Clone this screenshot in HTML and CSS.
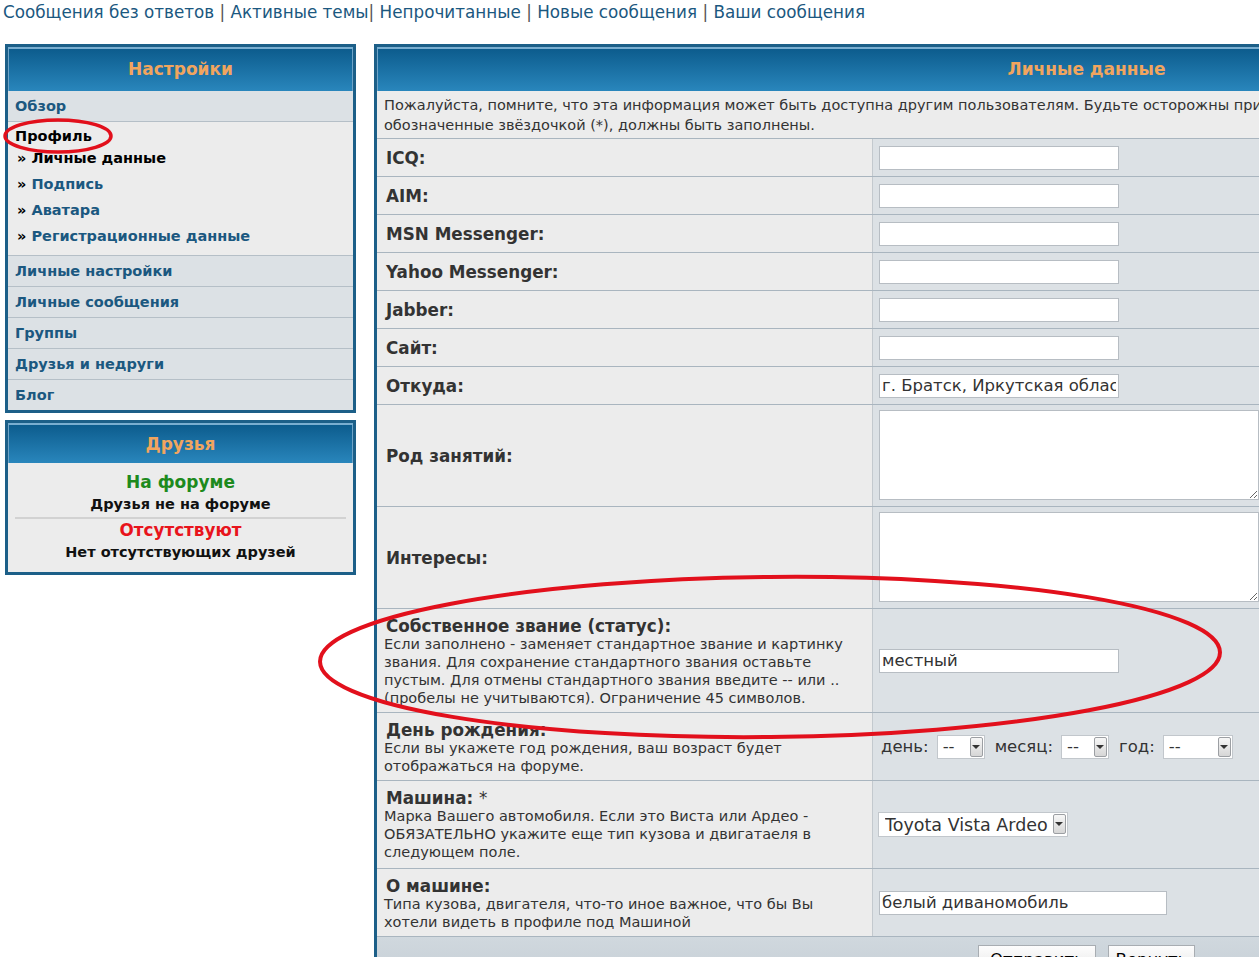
FILE: index.html
```html
<!DOCTYPE html>
<html lang="ru">
<head>
    <meta charset="utf-8">
    <link rel="stylesheet" href="styles.css">
    <title>Личный раздел</title>
</head>
<body>
    <div class="topnav">
        <a href="#">Сообщения без ответов</a> | <a href="#">Активные темы</a>| <a href="#">Непрочитанные</a> | <a href="#">Новые сообщения</a> | <a href="#">Ваши сообщения</a>
    </div>

    <div class="page">
        <div class="side">
            <div class="panel">
                <div class="panel-head">Настройки</div>
                <div class="menu-row"><a href="#">Обзор</a></div>
                <div class="menu-group">
                    <div class="menu-title">Профиль</div>
                    <div class="menu-sub current">» Личные данные</div>
                    <div class="menu-sub">» <a href="#">Подпись</a></div>
                    <div class="menu-sub">» <a href="#">Аватара</a></div>
                    <div class="menu-sub">» <a href="#">Регистрационные данные</a></div>
                </div>
                <div class="menu-row"><a href="#">Личные настройки</a></div>
                <div class="menu-row"><a href="#">Личные сообщения</a></div>
                <div class="menu-row"><a href="#">Группы</a></div>
                <div class="menu-row"><a href="#">Друзья и недруги</a></div>
                <div class="menu-row last"><a href="#">Блог</a></div>
            </div>

            <div class="panel friends">
                <div class="panel-head short">Друзья</div>
                <div class="friends-body">
                    <div class="online">На форуме</div>
                    <div class="note">Друзья не на форуме</div>
                    <hr>
                    <div class="offline">Отсутствуют</div>
                    <div class="note">Нет отсутствующих друзей</div>
                </div>
            </div>
        </div>

        <div class="panel main">
            <div class="panel-head">Личные данные</div>
            <div class="intro">
                Пожалуйста, помните, что эта информация может быть доступна другим пользователям. Будьте осторожны при вводе личных данных. Поля,<br>
                обозначенные звёздочкой (*), должны быть заполнены.
            </div>

            <div class="row">
                <div class="label">ICQ:</div>
                <div class="value"><input type="text" class="inp"></div>
            </div>
            <div class="row">
                <div class="label">AIM:</div>
                <div class="value"><input type="text" class="inp"></div>
            </div>
            <div class="row">
                <div class="label">MSN Messenger:</div>
                <div class="value"><input type="text" class="inp"></div>
            </div>
            <div class="row">
                <div class="label">Yahoo Messenger:</div>
                <div class="value"><input type="text" class="inp"></div>
            </div>
            <div class="row">
                <div class="label">Jabber:</div>
                <div class="value"><input type="text" class="inp"></div>
            </div>
            <div class="row">
                <div class="label">Сайт:</div>
                <div class="value"><input type="text" class="inp"></div>
            </div>
            <div class="row">
                <div class="label">Откуда:</div>
                <div class="value"><input type="text" class="inp" value="г. Братск, Иркутская область"></div>
            </div>
            <div class="row">
                <div class="label">Род занятий:</div>
                <div class="value area"><textarea></textarea></div>
            </div>
            <div class="row">
                <div class="label">Интересы:</div>
                <div class="value area"><textarea></textarea></div>
            </div>
            <div class="row">
                <div class="label top">Собственное звание (статус):
                    <div class="desc">Если заполнено - заменяет стандартное звание и картинку звания. Для сохранение стандартного звания оставьте пустым. Для отмены стандартного звания введите -- или .. (пробелы не учитываются). Ограничение 45 символов.</div>
                </div>
                <div class="value"><input type="text" class="inp" value="местный"></div>
            </div>
            <div class="row">
                <div class="label top">День рождения:
                    <div class="desc">Если вы укажете год рождения, ваш возраст будет отображаться на форуме.</div>
                </div>
                <div class="value dates">
                    день: <span class="select day"><select><option>--</option></select></span>
                    месяц: <span class="select day"><select><option>--</option></select></span>
                    год: <span class="select year"><select><option>--</option></select></span>
                </div>
            </div>
            <div class="row">
                <div class="label top tall">Машина: <span class="star">*</span>
                    <div class="desc">Марка Вашего автомобиля. Если это Виста или Ардео - ОБЯЗАТЕЛЬНО укажите еще тип кузова и двигатаеля в следующем поле.</div>
                </div>
                <div class="value"><span class="select car"><select><option>Toyota Vista Ardeo</option></select></span></div>
            </div>
            <div class="row">
                <div class="label top">О машине:
                    <div class="desc">Типа кузова, двигателя, что-то иное важное, что бы Вы хотели видеть в профиле под Машиной</div>
                </div>
                <div class="value"><input type="text" class="inp wide" value="белый диваномобиль"></div>
            </div>
            <div class="foot">
                <button class="btn">Отправить</button>
                <button class="btn">Вернуть</button>
            </div>
        </div>
    </div>

    <svg class="marks" width="1259" height="957" viewBox="0 0 1259 957">
        <ellipse cx="58" cy="136" rx="53" ry="16" fill="none" stroke="#e2101c" stroke-width="3.5"/>
        <ellipse cx="770" cy="657" rx="450" ry="80" fill="none" stroke="#e2101c" stroke-width="4" transform="rotate(-0.6 770 657)"/>
    </svg>
</body>
</html>
```

FILE: styles.css
```css
html {
    overflow: hidden;
}
body {
    margin: 0;
    font-family: "DejaVu Sans", Verdana, sans-serif;
    color: #333;
    background: #fff;
    position: relative;
}
a {
    color: #1b5880;
    text-decoration: none;
}

.topnav {
    padding: 3px 3px 0;
    font-size: 16.8px;
    line-height: 19px;
    height: 41px;
    color: #555;
    white-space: nowrap;
}

.page {
    display: flex;
    align-items: flex-start;
    gap: 18px;
    padding-left: 5px;
}
.side {
    width: 351px;
    flex-shrink: 0;
    display: flex;
    flex-direction: column;
    gap: 7px;
}

.panel {
    border: 3px solid #1c5f88;
    background: #dce1e5;
}
.panel-head {
    height: 44px;
    line-height: 45px;
    text-align: center;
    font-size: 17px;
    font-weight: bold;
    color: #f1a55e;
    background: linear-gradient(#0b5a8b, #2986bc);
    box-shadow: inset 0 2px 0 #7aaed0, inset 1px 0 0 #6fa4c8, inset -1px 0 0 #6fa4c8;
}
.panel-head.short {
    height: 40px;
    line-height: 43px;
}

.menu-row {
    height: 30px;
    line-height: 31px;
    padding-left: 7px;
    border-bottom: 1px solid #b5bfc7;
    font-size: 14.5px;
    font-weight: bold;
}
.menu-row.last {
    border-bottom: 0;
}
.menu-group {
    background: #ececec;
    padding: 5px 0 6px 7px;
    border-bottom: 1px solid #b5bfc7;
    font-size: 14.5px;
    font-weight: bold;
    color: #000;
}
.menu-title {
    line-height: 18px;
}
.menu-sub {
    line-height: 26px;
    padding-left: 2px;
}
.menu-sub.current {
    color: #000;
}

.friends-body {
    background: #ececec;
    padding: 8px 7px 9px;
    text-align: center;
    font-weight: bold;
    line-height: 22px;
}
.friends-body hr {
    border: 0;
    border-top: 2px solid #d2d2d2;
    margin: 2px 0 0;
}
.online {
    color: #1d8a1d;
    font-size: 17px;
}
.offline {
    color: #e8141c;
    font-size: 16.8px;
}
.note {
    color: #111;
    font-size: 14.5px;
}

.main {
    width: 1419px;
    flex-shrink: 0;
}
.intro {
    background: #ececec;
    padding: 4px 7px 3px;
    font-size: 14.5px;
    line-height: 20px;
    border-bottom: 1px solid #a9b5bf;
    white-space: nowrap;
}
.row {
    display: grid;
    grid-template-columns: 496px 1fr;
    border-bottom: 1px solid #a9b5bf;
    min-height: 37px;
}
.label {
    background: #ececec;
    border-right: 1px solid #c3c9ce;
    padding: 0 12px 0 9px;
    font-size: 16.8px;
    font-weight: bold;
    line-height: 18px;
    display: flex;
    align-items: center;
}
.label.top {
    display: block;
    padding: 8px 12px 5px 9px;
}
.label.tall {
    padding-bottom: 7px;
}
.star {
    font-weight: normal;
}
.desc {
    font-size: 14.5px;
    font-weight: normal;
    line-height: 18px;
    margin-left: -2px;
}
.value {
    padding: 0 6px;
    display: flex;
    align-items: center;
    font-size: 16.5px;
}
.value.area {
    padding: 5px 6px 6px;
    align-items: flex-start;
}
.inp {
    width: 240px;
    height: 24px;
    box-sizing: border-box;
    border: 1px solid #b7bdc3;
    padding: 0 2px;
    font-family: "DejaVu Sans", Verdana, sans-serif;
    font-size: 16.5px;
    color: #333;
    background: #fff;
}
.inp.wide {
    width: 288px;
}
textarea {
    display: block;
    width: 380px;
    height: 90px;
    box-sizing: border-box;
    border: 1px solid #b7bdc3;
    background: #fff;
}

.dates {
    padding-left: 8px;
    gap: 8px;
}
.select {
    position: relative;
    display: inline-block;
    height: 24px;
    margin-right: 2px;
}
.select select {
    appearance: none;
    -webkit-appearance: none;
    width: 100%;
    height: 100%;
    box-sizing: border-box;
    border: 1px solid #c2c7cc;
    background: #fff;
    padding: 0 0 0 5px;
    font-family: "DejaVu Sans", Verdana, sans-serif;
    font-size: 16.5px;
    color: #333;
    border-radius: 0;
}
.select::after {
    content: "";
    position: absolute;
    right: 2px;
    top: 2px;
    width: 11px;
    height: 18px;
    border: 1px solid #9c9fa3;
    border-radius: 2px;
    background: linear-gradient(#f7f7f7, #d6d6d6);
}
.select::before {
    content: "";
    position: absolute;
    right: 5px;
    top: 10px;
    border-left: 4px solid transparent;
    border-right: 4px solid transparent;
    border-top: 4px solid #333;
    z-index: 1;
}
.select.day {
    width: 48px;
}
.select.year {
    width: 70px;
}
.select.car {
    width: 190px;
    height: 25px;
    margin-left: -1px;
}
.select.car select {
    padding-left: 6px;
    font-size: 17.5px;
}

.foot {
    height: 40px;
    background: linear-gradient(#d0d8de, #c5ced5);
    display: flex;
    justify-content: center;
    gap: 12px;
    padding-top: 8px;
}
.btn {
    width: 118px;
    height: 28px;
    border: 1px solid #a8adb2;
    background: linear-gradient(#fdfdfd, #e6e6e6);
    font-family: "DejaVu Sans", Verdana, sans-serif;
    font-size: 16.5px;
    color: #000;
}
.btn + .btn {
    width: 87px;
}

.marks {
    position: absolute;
    left: 0;
    top: 0;
    pointer-events: none;
}
```
